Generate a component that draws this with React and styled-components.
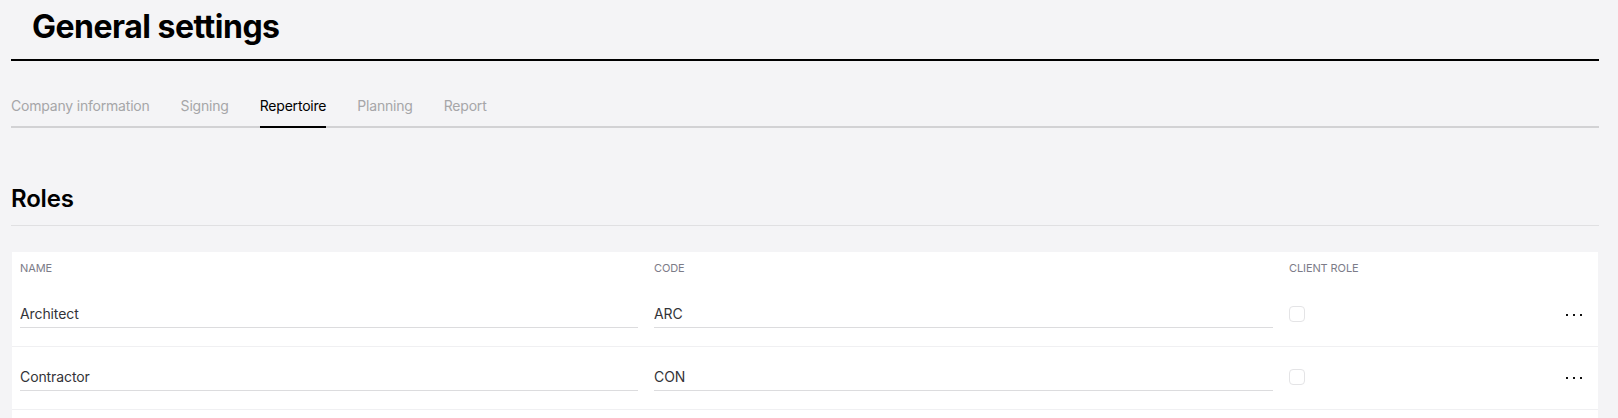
import React from "react";
import styled, { createGlobalStyle } from "styled-components";

const GlobalStyle = createGlobalStyle`
  html, body {
    margin: 0;
    padding: 0;
    background: #f4f4f6;
    font-family: Inter, "Noto Sans", "Liberation Sans", sans-serif;
    color: #000;
  }
  * { box-sizing: border-box; }
`;

const Page = styled.div`
  padding: 0 19px 0 11px;
`;

const Header = styled.header`
  padding: 7px 0 12px 21px;
  border-bottom: 2px solid #000;
`;

const Title = styled.h1`
  margin: 0;
  font-size: 32px;
  line-height: 40px;
  font-weight: 700;
  letter-spacing: -0.5px;
`;

const Tabs = styled.nav`
  display: flex;
  gap: 31px;
  margin-top: 35px;
  border-bottom: 2px solid #d2d2d4;
`;

const Tab = styled.button`
  appearance: none;
  background: none;
  border: none;
  padding: 0 0 10px;
  margin: 0 0 -2px;
  font-family: inherit;
  font-size: 14px;
  line-height: 20px;
  letter-spacing: -0.2px;
  color: ${(p) => (p.$active ? "#000" : "#a6a6a8")};
  border-bottom: 2px solid ${(p) => (p.$active ? "#000" : "transparent")};
  cursor: pointer;
`;

const SectionTitle = styled.h2`
  margin: 55px 0 0;
  padding-bottom: 10px;
  font-size: 24px;
  line-height: 32px;
  font-weight: 600;
  letter-spacing: -0.2px;
  border-bottom: 1px solid #e0e0e2;
`;

const Card = styled.div`
  margin: 26px 1px 0;
  padding-bottom: 24px;
  background: #fff;
`;

const Grid = styled.div`
  display: grid;
  grid-template-columns: 618px 619px 1fr 32px;
  column-gap: 16px;
  padding: ${(p) => (p.$head ? "0 8px" : "16px 8px 18px")};
  height: ${(p) => (p.$head ? "32px" : "63px")};
  align-items: ${(p) => (p.$head ? "center" : "start")};
  border-bottom: ${(p) => (p.$head ? "none" : "1px solid #f0f0f2")};
`;

const HeadCell = styled.div`
  font-size: 11px;
  line-height: 16px;
  text-transform: uppercase;
  letter-spacing: -0.1px;
  color: #7c7c88;
`;

const Field = styled.input`
  width: 100%;
  height: 28px;
  border: none;
  border-bottom: 1px solid #dcdcde;
  padding: 0;
  outline: none;
  background: transparent;
  font-family: inherit;
  font-size: 14px;
  letter-spacing: -0.1px;
  color: #333338;
`;

const Check = styled.span`
  display: block;
  width: 16px;
  height: 16px;
  margin-top: 6px;
  border: 1px solid #e4e4e6;
  border-radius: 4px;
  background: #fff;
`;

const MoreButton = styled.button`
  appearance: none;
  background: none;
  border: none;
  padding: 0;
  margin-top: 13px;
  height: 4px;
  display: flex;
  justify-content: center;
  cursor: pointer;
`;

const Dots = () => (
  <svg width="18" height="4" viewBox="0 0 18 4">
    <rect x="1" y="1" width="2" height="2" fill="#111" />
    <rect x="8" y="1" width="2" height="2" fill="#111" />
    <rect x="15" y="1" width="2" height="2" fill="#111" />
  </svg>
);

const tabs = ["Company information", "Signing", "Repertoire", "Planning", "Report"];
const roles = [
  { name: "Architect", code: "ARC" },
  { name: "Contractor", code: "CON" },
];

export default function App() {
  return (
    <>
      <GlobalStyle />
      <Page>
        <Header>
          <Title>General settings</Title>
        </Header>
        <Tabs>
          {tabs.map((t) => (
            <Tab key={t} $active={t === "Repertoire"}>
              {t}
            </Tab>
          ))}
        </Tabs>
        <SectionTitle>Roles</SectionTitle>
        <Card>
          <Grid $head>
            <HeadCell>Name</HeadCell>
            <HeadCell>Code</HeadCell>
            <HeadCell>Client role</HeadCell>
            <span />
          </Grid>
          {roles.map((r) => (
            <Grid key={r.code}>
              <Field defaultValue={r.name} />
              <Field defaultValue={r.code} />
              <Check />
              <MoreButton aria-label="More">
                <Dots />
              </MoreButton>
            </Grid>
          ))}
        </Card>
      </Page>
    </>
  );
}
